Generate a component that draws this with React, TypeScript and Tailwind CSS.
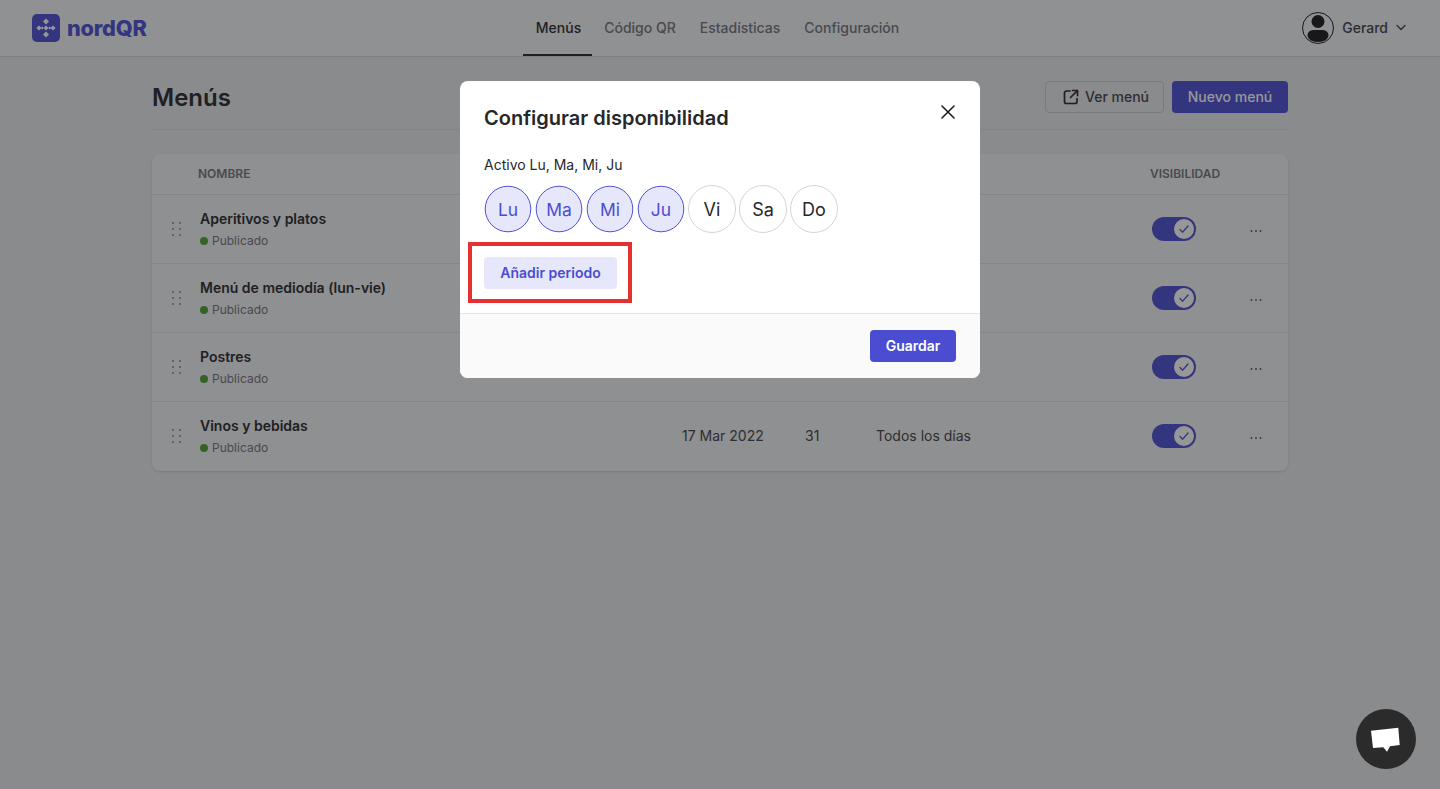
import React from "react";

const rows = [
  { name: "Aperitivos y platos" },
  { name: "Menú de mediodía (lun-vie)" },
  { name: "Postres" },
  { name: "Vinos y bebidas", date: "17 Mar 2022", count: "31", when: "Todos los días" },
];

const cols = "grid grid-cols-[48px_482px_123px_72px_275px_98px_38px] items-center";

function Logo() {
  const d = (x: number, y: number, r: number) => (
    <polygon key={`${x}-${y}`} points={`${x},${y - r} ${x + r},${y} ${x},${y + r} ${x - r},${y}`} fill="#ffffff" />
  );
  return (
    <svg width="28" height="28" viewBox="0 0 28 28" className="shrink-0">
      <rect width="28" height="28" rx="5" fill="#4a4dd0" />
      {d(14, 7.5, 3)}
      {d(14, 14, 2.4)}
      {d(14, 20.5, 3)}
      {d(7, 14, 2.6)}
      {d(21, 14, 2.6)}
      {d(10.4, 14, 1.5)}
      {d(17.6, 14, 1.5)}
    </svg>
  );
}

function Avatar() {
  return (
    <svg width="32" height="32" viewBox="0 0 32 32" className="shrink-0">
      <circle cx="16" cy="16" r="15.5" fill="#f3f4f5" stroke="#18181b" strokeWidth="1" />
      <circle cx="16" cy="9.500" r="6.500" fill="#18181b" />
      <path d="M5.500 23.500a5.500 5.500 0 0 1 5.500-5.500h10a5.500 5.500 0 0 1 5.500 5.500c0 0-.5 6.500-10.500 6.500s-10.500-6.500-10.500-6.500z" fill="#18181b" />
    </svg>
  );
}

function DragDots() {
  return (
    <div className="ml-5 grid w-[9px] grid-cols-2 gap-x-[5px] gap-y-1">
      {[0, 1, 2, 3, 4, 5].map((i) => (
        <span key={i} className="h-[2px] w-[2px] bg-[#a1a1aa]" />
      ))}
    </div>
  );
}

function Toggle() {
  return (
    <div className="flex h-6 w-11 items-center justify-end rounded-full bg-[#4a4dd0] pr-0.5">
      <div className="flex h-5 w-5 items-center justify-center rounded-full bg-white">
        <svg width="12" height="12" viewBox="0 0 12 12" fill="none">
          <path d="M2 6.500l2.700 2.700L10 3" stroke="#4a4dd0" strokeWidth="1.300" strokeLinecap="round" strokeLinejoin="round" />
        </svg>
      </div>
    </div>
  );
}

function Dots() {
  return (
    <svg width="12" height="4" viewBox="0 0 12 4" className="mt-1">
      <circle cx="1.500" cy="2" r="0.900" fill="#52525b" />
      <circle cx="6" cy="2" r="0.900" fill="#52525b" />
      <circle cx="10.500" cy="2" r="0.900" fill="#52525b" />
    </svg>
  );
}

function Day({ label, active }: { label: string; active?: boolean }) {
  return (
    <div
      className={
        active
          ? "flex h-12 w-12 scale-[0.97] items-center justify-center rounded-full border border-[#4a4dd0] bg-[#e6e7fb] pt-[1px] text-lg text-[#4a4dd0]"
          : "flex h-12 w-12 items-center justify-center rounded-full border border-[#d4d4d8] bg-white pt-[2px] text-lg text-[#27272a]"
      }
    >
      {label}
    </div>
  );
}

export default function App() {
  return (
    <div className="relative h-screen overflow-hidden bg-[#e8e9eb] font-['Inter',sans-serif] text-[#27272a]">
      <header className="flex h-[57px] items-center justify-between border-b border-[#d4d4d8] bg-[#f3f4f5] pl-8 pr-[34px]">
        <div className="flex w-[260px] items-center gap-[7px]">
          <Logo />
          <span className="text-[21.700px] font-extrabold leading-7 tracking-[-0.2px] text-[#4a4dd0]">nordQR</span>
        </div>
        <nav className="flex h-full items-stretch gap-6 text-sm font-medium text-[#71717a]">
          <a className="-mr-3 flex items-center border-b-2 border-[#27272a] pl-[13px] pr-[11px] pt-[2px] text-[#27272a]">Menús</a>
          <a className="flex items-center">Código QR</a>
          <a className="flex items-center">Estadísticas</a>
          <a className="flex items-center">Configuración</a>
        </nav>
        <div className="flex w-[276px] items-center justify-end">
          <Avatar />
          <span className="ml-2 text-sm font-medium text-[#3f3f46]">Gerard</span>
          <svg width="10" height="10" viewBox="0 0 10 10" fill="none" className="mb-[2px] ml-2">
            <path d="M1 3.500L5 7.500l4-4" stroke="#3f3f46" strokeWidth="1.400" strokeLinecap="round" strokeLinejoin="round" />
          </svg>
        </div>
      </header>

      <main className="mx-auto w-[1136px]">
        <div className="flex h-[73px] items-start justify-between border-b border-[#d9dadc] pt-6">
          <h1 className="mt-[1px] text-2xl font-semibold leading-8">Menús</h1>
          <div className="flex gap-2">
            <button className="flex h-8 w-[119px] items-center gap-[6px] rounded border border-[#c9cacc] pl-[17px] text-sm font-medium text-[#3f3f46]">
              <svg width="16" height="16" viewBox="0 0 16 16" fill="none">
                <path d="M7 2H3.500a2 2 0 0 0-2 2v8.500a2 2 0 0 0 2 2H12a2 2 0 0 0 2-2V9.500M9.500 1.500h5v5M14.500 1.500l-7 7" stroke="#27272a" strokeWidth="1.700" strokeLinecap="round" strokeLinejoin="round" />
              </svg>
              Ver menú
            </button>
            <button className="h-8 w-[116px] rounded bg-[#4a4dd0] text-sm font-medium text-white">Nuevo menú</button>
          </div>
        </div>

        <section className="mt-6 rounded-lg bg-[#f1f2f3] shadow-sm">
          <div className={`${cols} h-[41px] border-b border-[#e0e1e3] text-xs font-semibold uppercase text-[#71717a]`}>
            <span />
            <span className="-ml-[2px]">Nombre</span>
            <span />
            <span />
            <span />
            <span className="-ml-[2px]">Visibilidad</span>
            <span />
          </div>
          {rows.map((r, i) => (
            <div key={r.name} className={`${cols} h-[69px] ${i < 3 ? "border-b border-[#e0e1e3]" : "pb-[1px]"}`}>
              <DragDots />
              <div>
                <div className="text-sm font-semibold leading-5">{r.name}</div>
                <div className="mt-1 flex items-center gap-1 text-xs leading-4 text-[#71717a]">
                  <span className="h-2 w-2 rounded-full bg-[#4ea02f]" />
                  Publicado
                </div>
              </div>
              <span className="text-sm text-[#3f3f46]">{r.date}</span>
              <span className="text-sm text-[#3f3f46]">{r.count}</span>
              <span className="-ml-[1px] text-sm text-[#3f3f46]">{r.when}</span>
              <Toggle />
              <Dots />
            </div>
          ))}
        </section>
      </main>

      <div className="absolute inset-0 bg-[rgba(24,24,27,0.45)]" />

      <div className="absolute left-[460px] top-[81px] w-[520px] overflow-hidden rounded-lg bg-white">
        <div className="px-6 pt-[23px]">
          <div className="flex items-center justify-between">
            <h2 className="text-xl font-semibold leading-7">Configurar disponibilidad</h2>
            <svg width="14" height="14" viewBox="0 0 14 14" fill="none" className="mb-3 mr-[1px]">
              <path d="M1 1l12 12M13 1L1 13" stroke="#18181b" strokeWidth="1.500" strokeLinecap="round" />
            </svg>
          </div>
          <p className="mt-[23px] text-sm leading-5">Activo Lu, Ma, Mi, Ju</p>
          <div className="mt-[10px] flex gap-[3px]">
            <Day label="Lu" active />
            <Day label="Ma" active />
            <Day label="Mi" active />
            <Day label="Ju" active />
            <Day label="Vi" />
            <Day label="Sa" />
            <Day label="Do" />
          </div>
          <div className="relative mt-6 inline-flex">
            <button className="h-8 w-[133px] rounded bg-[#e6e7fb] text-sm font-semibold text-[#4a4dd0]">Añadir periodo</button>
            <div className="absolute -bottom-[14px] -left-4 -right-[15px] -top-[15px] border-4 border-[#e53030]" />
          </div>
        </div>
        <div className="mt-6 flex justify-end border-t border-[#e4e4e7] bg-[#fafafa] px-6 py-4">
          <button className="h-8 w-[86px] rounded bg-[#4a4dd0] text-sm font-semibold text-white">Guardar</button>
        </div>
      </div>

      <div className="absolute bottom-5 right-6 h-[60px] w-[60px] rounded-full bg-[#2b2b2b]">
        <svg width="60" height="60" viewBox="0 0 60 60">
          <polygon points="15,21.700 42.300,18.700 43.700,36 34,37.300 31,42.700 27.300,38.300 17,39" fill="#ffffff" />
        </svg>
      </div>
    </div>
  );
}
